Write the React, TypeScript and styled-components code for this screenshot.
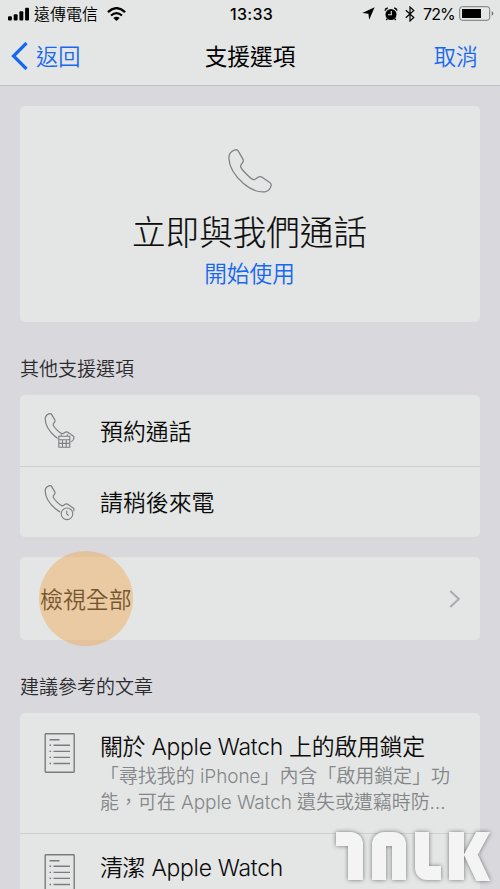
import React from "react";
import styled, { createGlobalStyle } from "styled-components";

const Global = createGlobalStyle`
  * { box-sizing: border-box; }
  html, body { margin: 0; padding: 0; overflow: hidden; background: #d9d8dd; }
  body { font-family: Inter, "Noto Sans CJK TC", sans-serif; font-weight: 350; color: #0c0c0c; }
`;

const Screen = styled.div`
  position: relative;
  width: 500px;
  height: 889px;
  overflow: hidden;
  background: #d9d8dd;
`;

const Header = styled.header`
  height: 86px;
  background: #e4e6e5;
  border-bottom: 1px solid #bfc0c6;
`;

const StatusBar = styled.div`
  display: grid;
  grid-template-columns: 1fr auto 1fr;
  align-items: center;
  height: 27px;
  padding: 0 6px 0 8px;
  font-size: 16px;
  color: #000;
`;

const StatusGroup = styled.div<{ $end?: boolean }>`
  display: flex;
  align-items: center;
  justify-content: ${(p) => (p.$end ? "flex-end" : "flex-start")};
  height: 27px;
  white-space: nowrap;
  svg { flex: none; display: block; }
`;

const Carrier = styled.span`
  margin: 0 9px 0 5px;
  line-height: 26px;
`;

const Clock = styled.span`
  margin-left: 1px;
  font-size: 16px;
  font-weight: 500;
  letter-spacing: 0.3px;
`;

const Percent = styled.span`
  margin: 0 4px 0 8px;
  font-size: 16px;
  font-weight: 400;
  letter-spacing: -0.8px;
`;

const NavBar = styled.nav`
  display: grid;
  grid-template-columns: 1fr auto 1fr;
  align-items: center;
  height: 58px;
  padding: 0 22px 0 11px;
`;

const NavButton = styled.a<{ $end?: boolean }>`
  display: flex;
  align-items: center;
  justify-content: ${(p) => (p.$end ? "flex-end" : "flex-start")};
  gap: 7px;
  font-size: 22.2px;
  line-height: 30px;
  color: #1768f0;
`;

const NavTitle = styled.h1`
  margin: 2px 0 0 11px;
  font-size: 22.7px;
  line-height: 30px;
  font-weight: 400;
  color: #000;
`;

const NavLabel = styled.span`
  padding-top: 2px;
`;

const Content = styled.main`
  padding: 20px 20px 0;
`;

const Card = styled.section`
  background: #e4e6e5;
  border-radius: 5px;
`;

const CallCard = styled(Card)`
  display: flex;
  flex-direction: column;
  align-items: center;
  height: 216px;
  padding: 43px 1px 0 0;
`;

const CallTitle = styled.h2`
  margin: 17px 0 0;
  font-size: 33.6px;
  line-height: 46px;
  font-weight: 300;
  -webkit-text-stroke: 0.2px #0c0c0c;
`;

const CallLink = styled.a`
  margin-top: 2px;
  font-size: 22.7px;
  line-height: 32px;
  color: #1768f0;
`;

const SectionLabel = styled.h3`
  margin: 34px 0 12px;
  font-size: 19px;
  line-height: 27px;
  font-weight: 350;
  color: #2b2b2e;
`;

const OptionRow = styled.div`
  display: flex;
  align-items: center;
  height: 71px;
  padding: 0 0 2px 24px;
  font-size: 22.9px;
  & + & { border-top: 1px solid #cdced0; }
  svg { flex: none; margin: 2px 21px 0 0; }
`;

const AllCard = styled(Card)`
  position: relative;
  display: flex;
  align-items: center;
  justify-content: space-between;
  height: 83px;
  margin-top: 20px;
  padding: 0 19px 2px 20px;
  font-size: 22.9px;
  svg { margin-top: 2px; }
`;

const TouchMarker = styled.i`
  position: absolute;
  left: 19px;
  top: -6px;
  width: 94px;
  height: 95px;
  border-radius: 50%;
  background: rgba(240, 169, 84, 0.46);
`;

const Article = styled.article`
  display: flex;
  height: 120px;
  padding: 19px 0 0 24px;
  & + & { border-top: 1px solid #cdced0; }
  svg { flex: none; margin: 1px 23px 0 0; }
`;

const ArticleTitle = styled.div`
  font-size: 22.9px;
  line-height: 30px;
  letter-spacing: -0.27px;
  white-space: pre;
`;

const ArticleText = styled.p`
  margin: 2px 0 0;
  font-size: 19px;
  line-height: 26px;
  letter-spacing: -0.07px;
  color: #85868a;
  white-space: pre;
`;

const Wordmark = styled.div`
  position: absolute;
  left: 336px;
  top: 832px;
  display: flex;
  width: 156px;
  height: 48px;
  filter: drop-shadow(0 0 2px rgba(0, 0, 0, 0.5));
`;

const MarkHook = styled.i`
  display: flex;
  flex-direction: column;
  align-items: flex-end;
  width: 27px;
  margin-right: 8.5px;
  &::before {
    content: "";
    width: 27px;
    height: 14px;
    border-radius: 0 12px 0 0;
    background: #f4f4f4;
  }
  &::after {
    content: "";
    width: 15px;
    height: 34px;
    background: #f4f4f4;
  }
`;

const MarkArch = styled.i`
  display: flex;
  justify-content: space-between;
  width: 34.5px;
  margin-right: 8.5px;
  background: linear-gradient(#f4f4f4, #f4f4f4) 50% 0 / 10px 14px no-repeat;
  &::before, &::after {
    content: "";
    width: 14.5px;
    background: #f4f4f4;
  }
  &::before { border-radius: 12px 0 0 0; }
  &::after { border-radius: 0 12px 0 0; }
`;

const MarkFoot = styled.i`
  display: flex;
  flex-direction: column;
  width: 26.5px;
  margin-right: 8px;
  &::before {
    content: "";
    width: 14.5px;
    height: 34px;
    background: #f4f4f4;
  }
  &::after {
    content: "";
    width: 26.5px;
    height: 14px;
    border-radius: 0 0 0 12px;
    background: #f4f4f4;
  }
`;

const MarkStem = styled.i`
  width: 15px;
  background: #f4f4f4;
`;

const MarkChevron = styled.i`
  display: grid;
  grid-template-rows: 22.5px 25.5px;
  width: 14px;
  margin-left: 5.5px;
  &::before, &::after { content: ""; background: #f4f4f4; }
  &::before { transform: skewX(-28.5deg); }
  &::after { transform: skewX(25.5deg); }
`;

const handset =
  "M6.2 1.2C3 2.5.7 5.5.9 9.5 1.4 19 8 28 15.5 34.5 22 40 30 43.6 37 42.8c3.5-.4 6-3.8 6.2-6.8 0-1-.4-1.7-1.2-2.2L34.5 28.5c-1.5-1-3-1.1-4.5-.2-1.5.9-2.5 2.3-4.2 2.5C22 29.5 13.5 20.5 12.5 17.5c0-1.5 1.5-3 2.5-4.7.5-.8.4-1.6 0-2.4L10.5 2.4C9.7.9 8 .4 6.2 1.2Z";

const PhoneIcon = () => (
  <svg width="44" height="44" viewBox="0 0 44 44" fill="none" stroke="#818285" strokeWidth="1.3">
    <path d={handset} />
  </svg>
);

const PhoneBadgeIcon = ({ kind }: { kind: "calendar" | "clock" }) => (
  <svg width="35" height="37" viewBox="0 0 35 37" fill="none" stroke="#7d7e81" strokeWidth="1.1">
    <g transform="translate(.6 1) scale(.68)" strokeWidth="1.8">
      <path d={handset} />
    </g>
    {kind === "calendar" ? (
      <>
        <path d="M13.6 22.5h13V36h-13z" fill="#e4e6e5" stroke="none" />
        <path d="M14.8 24.2h11v11h-11zM14.8 27.7h11M14.8 31.4h11M18.5 27.7v7.5M22.2 27.7v7.5M17.3 22.3v2M23.3 22.3v2" />
      </>
    ) : (
      <>
        <circle cx="23" cy="29.8" r="7" fill="#e4e6e5" stroke="none" />
        <circle cx="23" cy="29.8" r="5.8" />
        <path d="M22.8 26.4v3.5l1.8 1.8" />
      </>
    )}
  </svg>
);

const DocumentIcon = () => (
  <svg width="33" height="40" viewBox="0 0 33 40" fill="none" stroke="#7a7b7f" strokeWidth="1.4">
    <rect x="1.2" y=".8" width="29" height="38.4" rx=".7" />
    <path d="M5.5 6.8h10M9.5 12.3H26M9.5 18.4H26M9.5 24.4H26M9.5 30.5H26M5.5 12.3h1.6M5.5 18.4h1.6M5.5 24.4h1.6M5.5 30.5h1.6" />
  </svg>
);

const SignalIcon = () => (
  <svg width="21" height="14" viewBox="0 0 21 14">
    <rect x="0" y="9.2" width="3.9" height="4.3" rx="1" />
    <rect x="5.7" y="7.2" width="3.9" height="6.3" rx="1" />
    <rect x="11.4" y="4.2" width="3.9" height="9.3" rx="1" />
    <rect x="17.1" y=".7" width="3.9" height="12.8" rx="1" />
  </svg>
);

const WifiIcon = () => (
  <svg width="19" height="14" viewBox="0 0 19 14" fill="none" stroke="#000" strokeWidth="2.3">
    <path d="M.9 5.1Q9.5-2.8 18.1 5.1M4 8.5q5.5-4.7 11 0" />
    <path d="M6.3 10.9q3.2-2.5 6.4 0L9.5 14Z" fill="#000" stroke="none" />
  </svg>
);

const LocationIcon = () => (
  <svg width="13" height="13" viewBox="0 0 13 13">
    <path d="M12.6.3 7.2 12.7 6.4 6.8.3 6Z" />
  </svg>
);

const AlarmIcon = () => (
  <svg width="14" height="14" viewBox="0 0 14 14">
    <circle cx="7" cy="7.5" r="5.5" />
    <path d="M1 3.7Q1.4 1.4 3.8 1M13 3.7Q12.6 1.4 10.2 1M3.3 11.6l-1 1.4M10.7 11.6l1 1.4" fill="none" stroke="#000" strokeWidth="1.4" />
    <path d="M7.3 4v3.8H4" fill="none" stroke="#e4e6e5" strokeWidth="1.1" />
  </svg>
);

const BluetoothIcon = () => (
  <svg width="10" height="16" viewBox="0 0 10 16" fill="none" stroke="#000" strokeWidth="1.2">
    <path d="m.8 4.3 8 7.2L5 15V1l3.8 3.5-8 7.2" />
  </svg>
);

const BatteryIcon = () => (
  <svg width="35" height="15" viewBox="0 0 35 15">
    <rect x=".7" y=".7" width="30" height="13.6" rx="2.6" fill="none" stroke="#77787a" />
    <rect x="3" y="3" width="19" height="9" />
    <path d="M32.7 5.3q1.7.6 1.7 2.2t-1.7 2.2Z" fill="#77787a" />
  </svg>
);

const Gap = styled.span<{ $w: number }>`
  width: ${(p) => p.$w}px;
`;

const options = [
  { label: "預約通話", kind: "calendar" as const },
  { label: "請稍後來電", kind: "clock" as const },
];

const articles = [
  {
    title: "關於 Apple Watch 上的啟用鎖定",
    text: "「尋找我的 iPhone」內含「啟用鎖定」功\n能，可在 Apple Watch 遺失或遭竊時防…",
  },
  { title: "清潔 Apple Watch", text: "" },
];

export default function App() {
  return (
    <Screen lang="zh-TW">
      <Global />
      <Header>
        <StatusBar>
          <StatusGroup>
            <SignalIcon />
            <Carrier>遠傳電信</Carrier>
            <WifiIcon />
          </StatusGroup>
          <Clock>13:33</Clock>
          <StatusGroup $end>
            <LocationIcon />
            <Gap $w={9} />
            <AlarmIcon />
            <Gap $w={7} />
            <BluetoothIcon />
            <Percent>72%</Percent>
            <BatteryIcon />
          </StatusGroup>
        </StatusBar>
        <NavBar>
          <NavButton>
            <svg width="18" height="28" viewBox="0 0 18 28" fill="none" stroke="#1768f0" strokeWidth="3.2">
              <path d="M15.5 1 2.5 14l13 13" />
            </svg>
            <NavLabel>返回</NavLabel>
          </NavButton>
          <NavTitle>支援選項</NavTitle>
          <NavButton $end>
            <NavLabel>取消</NavLabel>
          </NavButton>
        </NavBar>
      </Header>
      <Content>
        <CallCard>
          <PhoneIcon />
          <CallTitle>立即與我們通話</CallTitle>
          <CallLink>開始使用</CallLink>
        </CallCard>
        <SectionLabel>其他支援選項</SectionLabel>
        <Card>
          {options.map((o) => (
            <OptionRow key={o.label}>
              <PhoneBadgeIcon kind={o.kind} />
              {o.label}
            </OptionRow>
          ))}
        </Card>
        <AllCard>
          檢視全部
          <svg width="12" height="18" viewBox="0 0 12 18" fill="none" stroke="#a9abb0" strokeWidth="2">
            <path d="m1.3 1 8.5 8-8.5 8" />
          </svg>
          <TouchMarker />
        </AllCard>
        <SectionLabel>建議參考的文章</SectionLabel>
        <Card>
          {articles.map((a) => (
            <Article key={a.title}>
              <DocumentIcon />
              <div>
                <ArticleTitle>{a.title}</ArticleTitle>
                {a.text && <ArticleText>{a.text}</ArticleText>}
              </div>
            </Article>
          ))}
        </Card>
      </Content>
      <Wordmark role="img" aria-label="TALK">
        <MarkHook />
        <MarkArch />
        <MarkFoot />
        <MarkStem />
        <MarkChevron />
      </Wordmark>
    </Screen>
  );
}
